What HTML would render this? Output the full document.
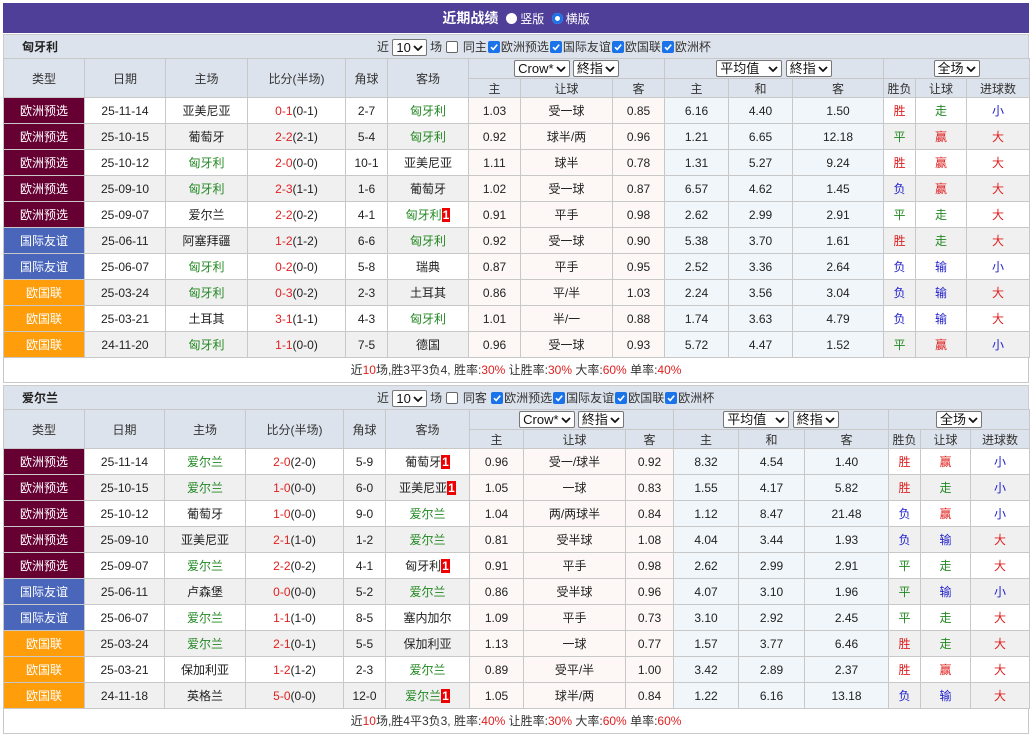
<!DOCTYPE html>
<html><head><meta charset="utf-8">
<style>
*{box-sizing:border-box;margin:0;padding:0}
body{width:1035px;height:737px;background:#fff;font-family:"Liberation Sans","Noto Sans CJK SC",sans-serif;font-size:12px;color:#222;overflow:hidden}
.top{position:absolute;left:3px;top:3px;width:1026px;height:30px;background:#4f3f99;color:#fff;text-align:center;line-height:30px;font-weight:bold;font-size:14px}
.top span{font-weight:normal;font-size:12px}
.rd{display:inline-block;width:11px;height:11px;border-radius:50%;background:#fff;vertical-align:-1px;margin:0 3px 0 4px}
.rd.on{background:#fff;box-shadow:inset 0 0 0 3px #1a73e8}
.sec{position:absolute;left:3px;width:1026px}
.tt{height:24px;background:#dde3ec;position:relative;line-height:24px;border:1px solid #ccc;border-bottom:none}
.tt b{position:absolute;left:18px;font-size:12px}
.tt .f{position:absolute;left:373px;color:#333}
.sel{display:inline-block;border:1px solid #777;border-radius:2px;background:#fff;height:17px;line-height:15px;padding:0 3px;vertical-align:middle;font-size:13px;color:#111}
.sel svg{vertical-align:1px;margin-left:2px}
.cb{display:inline-block;width:12px;height:12px;border:1px solid #666;border-radius:2px;background:#fff;vertical-align:middle;margin:-2px 1px 0;position:relative}
.cb.on{background:#1a73e8;border-color:#1a73e8}
.cb.on svg{position:absolute;left:0;top:0}
table{border-collapse:collapse;width:1026px;table-layout:fixed}
td{border:1px solid #c8c8c8;text-align:center;height:26px;white-space:nowrap;overflow:hidden}
tr.h td{background:#dde3ec;height:20px;color:#333}
tr.h2 td{height:19px}
tr.e td{background:#f0f0f0}
tr td.o{background:#fdf8f5}
tr td.u{background:#f0f6fa}
td.t1{background:#660033 !important;color:#fff}
td.t2{background:#4a66bb !important;color:#fff}
td.t3{background:#ff9d0a !important;color:#fff}
.g{color:#228822}.r{color:#e02020}.b{color:#2222cc}
.n{background:#e00;color:#fff;font-weight:bold;padding:0 1px}
.sum{height:25px;line-height:24px;text-align:center;border:1px solid #c8c8c8;border-top:none;color:#333}
</style></head><body>
<svg width="0" height="0" style="position:absolute"><defs><symbol id="ck" viewBox="0 0 10 10"><polyline points="2,5.2 4.2,7.4 8.2,2.6" fill="none" stroke="#fff" stroke-width="1.6"/></symbol><symbol id="dn" viewBox="0 0 10 6"><polyline points="1,1 5,5 9,1" fill="none" stroke="#111" stroke-width="1.8"/></symbol></defs></svg>
<div class="top">近期战绩 <span><i class="rd"></i>竖版 <i class="rd on"></i>横版</span></div>

<div class="sec" style="top:34px">
<div class="tt"><b>匈牙利</b><span class="f">近 <span class="sel">10<svg width="10" height="6"><use href="#dn"/></svg></span> 场 <i class="cb"></i> 同主<i class="cb on"><svg width="10" height="10"><use href="#ck"/></svg></i>欧洲预选<i class="cb on"><svg width="10" height="10"><use href="#ck"/></svg></i>国际友谊<i class="cb on"><svg width="10" height="10"><use href="#ck"/></svg></i>欧国联<i class="cb on"><svg width="10" height="10"><use href="#ck"/></svg></i>欧洲杯</span></div>
<table>
<colgroup><col width="81"><col width="81"><col width="82"><col width="98"><col width="42"><col width="81"><col width="52"><col width="92"><col width="52"><col width="64"><col width="64"><col width="91"><col width="32"><col width="51"><col width="63"></colgroup>
<tr class="h"><td rowspan="2">类型</td><td rowspan="2">日期</td><td rowspan="2">主场</td><td rowspan="2">比分(半场)</td><td rowspan="2">角球</td><td rowspan="2">客场</td><td colspan="3"><span class="sel">Crow*<svg width="10" height="6"><use href="#dn"/></svg></span> <span class="sel">終指<svg width="10" height="6"><use href="#dn"/></svg></span></td><td colspan="3"><span class="sel">平均值 &nbsp;<svg width="10" height="6"><use href="#dn"/></svg></span> <span class="sel">終指<svg width="10" height="6"><use href="#dn"/></svg></span></td><td colspan="3"><span class="sel">全场<svg width="10" height="6"><use href="#dn"/></svg></span></td></tr>
<tr class="h h2"><td>主</td><td>让球</td><td>客</td><td>主</td><td>和</td><td>客</td><td>胜负</td><td>让球</td><td>进球数</td></tr>
<tr><td class="t1">欧洲预选</td><td>25-11-14</td><td>亚美尼亚</td><td><span class="r">0-1</span>(0-1)</td><td>2-7</td><td class="g">匈牙利</td><td class="o">1.03</td><td class="o">受一球</td><td class="o">0.85</td><td class="u">6.16</td><td class="u">4.40</td><td class="u">1.50</td><td class="r">胜</td><td class="g">走</td><td class="b">小</td></tr>
<tr class="e"><td class="t1">欧洲预选</td><td>25-10-15</td><td>葡萄牙</td><td><span class="r">2-2</span>(2-1)</td><td>5-4</td><td class="g">匈牙利</td><td class="o">0.92</td><td class="o">球半/两</td><td class="o">0.96</td><td class="u">1.21</td><td class="u">6.65</td><td class="u">12.18</td><td class="g">平</td><td class="r">赢</td><td class="r">大</td></tr>
<tr><td class="t1">欧洲预选</td><td>25-10-12</td><td class="g">匈牙利</td><td><span class="r">2-0</span>(0-0)</td><td>10-1</td><td>亚美尼亚</td><td class="o">1.11</td><td class="o">球半</td><td class="o">0.78</td><td class="u">1.31</td><td class="u">5.27</td><td class="u">9.24</td><td class="r">胜</td><td class="r">赢</td><td class="r">大</td></tr>
<tr class="e"><td class="t1">欧洲预选</td><td>25-09-10</td><td class="g">匈牙利</td><td><span class="r">2-3</span>(1-1)</td><td>1-6</td><td>葡萄牙</td><td class="o">1.02</td><td class="o">受一球</td><td class="o">0.87</td><td class="u">6.57</td><td class="u">4.62</td><td class="u">1.45</td><td class="b">负</td><td class="r">赢</td><td class="r">大</td></tr>
<tr><td class="t1">欧洲预选</td><td>25-09-07</td><td>爱尔兰</td><td><span class="r">2-2</span>(0-2)</td><td>4-1</td><td class="g">匈牙利<span class="n">1</span></td><td class="o">0.91</td><td class="o">平手</td><td class="o">0.98</td><td class="u">2.62</td><td class="u">2.99</td><td class="u">2.91</td><td class="g">平</td><td class="g">走</td><td class="r">大</td></tr>
<tr class="e"><td class="t2">国际友谊</td><td>25-06-11</td><td>阿塞拜疆</td><td><span class="r">1-2</span>(1-2)</td><td>6-6</td><td class="g">匈牙利</td><td class="o">0.92</td><td class="o">受一球</td><td class="o">0.90</td><td class="u">5.38</td><td class="u">3.70</td><td class="u">1.61</td><td class="r">胜</td><td class="g">走</td><td class="r">大</td></tr>
<tr><td class="t2">国际友谊</td><td>25-06-07</td><td class="g">匈牙利</td><td><span class="r">0-2</span>(0-0)</td><td>5-8</td><td>瑞典</td><td class="o">0.87</td><td class="o">平手</td><td class="o">0.95</td><td class="u">2.52</td><td class="u">3.36</td><td class="u">2.64</td><td class="b">负</td><td class="b">输</td><td class="b">小</td></tr>
<tr class="e"><td class="t3">欧国联</td><td>25-03-24</td><td class="g">匈牙利</td><td><span class="r">0-3</span>(0-2)</td><td>2-3</td><td>土耳其</td><td class="o">0.86</td><td class="o">平/半</td><td class="o">1.03</td><td class="u">2.24</td><td class="u">3.56</td><td class="u">3.04</td><td class="b">负</td><td class="b">输</td><td class="r">大</td></tr>
<tr><td class="t3">欧国联</td><td>25-03-21</td><td>土耳其</td><td><span class="r">3-1</span>(1-1)</td><td>4-3</td><td class="g">匈牙利</td><td class="o">1.01</td><td class="o">半/一</td><td class="o">0.88</td><td class="u">1.74</td><td class="u">3.63</td><td class="u">4.79</td><td class="b">负</td><td class="b">输</td><td class="r">大</td></tr>
<tr class="e"><td class="t3">欧国联</td><td>24-11-20</td><td class="g">匈牙利</td><td><span class="r">1-1</span>(0-0)</td><td>7-5</td><td>德国</td><td class="o">0.96</td><td class="o">受一球</td><td class="o">0.93</td><td class="u">5.72</td><td class="u">4.47</td><td class="u">1.52</td><td class="g">平</td><td class="r">赢</td><td class="b">小</td></tr>
</table>
<div class="sum">近<span class="r">10</span>场,胜3平3负4, 胜率:<span class="r">30%</span> 让胜率:<span class="r">30%</span> 大率:<span class="r">60%</span> 单率:<span class="r">40%</span></div>
</div>

<div class="sec" style="top:385px">
<div class="tt"><b>爱尔兰</b><span class="f">近 <span class="sel">10<svg width="10" height="6"><use href="#dn"/></svg></span> 场 <i class="cb"></i> 同客 <i class="cb on"><svg width="10" height="10"><use href="#ck"/></svg></i>欧洲预选<i class="cb on"><svg width="10" height="10"><use href="#ck"/></svg></i>国际友谊<i class="cb on"><svg width="10" height="10"><use href="#ck"/></svg></i>欧国联<i class="cb on"><svg width="10" height="10"><use href="#ck"/></svg></i>欧洲杯</span></div>
<table>
<colgroup><col width="81"><col width="80"><col width="81"><col width="98"><col width="42"><col width="84"><col width="54"><col width="102"><col width="48"><col width="65"><col width="66"><col width="84"><col width="32"><col width="50"><col width="59"></colgroup>
<tr class="h"><td rowspan="2">类型</td><td rowspan="2">日期</td><td rowspan="2">主场</td><td rowspan="2">比分(半场)</td><td rowspan="2">角球</td><td rowspan="2">客场</td><td colspan="3"><span class="sel">Crow*<svg width="10" height="6"><use href="#dn"/></svg></span> <span class="sel">終指<svg width="10" height="6"><use href="#dn"/></svg></span></td><td colspan="3"><span class="sel">平均值 &nbsp;<svg width="10" height="6"><use href="#dn"/></svg></span> <span class="sel">終指<svg width="10" height="6"><use href="#dn"/></svg></span></td><td colspan="3"><span class="sel">全场<svg width="10" height="6"><use href="#dn"/></svg></span></td></tr>
<tr class="h h2"><td>主</td><td>让球</td><td>客</td><td>主</td><td>和</td><td>客</td><td>胜负</td><td>让球</td><td>进球数</td></tr>
<tr><td class="t1">欧洲预选</td><td>25-11-14</td><td class="g">爱尔兰</td><td><span class="r">2-0</span>(2-0)</td><td>5-9</td><td>葡萄牙<span class="n">1</span></td><td class="o">0.96</td><td class="o">受一/球半</td><td class="o">0.92</td><td class="u">8.32</td><td class="u">4.54</td><td class="u">1.40</td><td class="r">胜</td><td class="r">赢</td><td class="b">小</td></tr>
<tr class="e"><td class="t1">欧洲预选</td><td>25-10-15</td><td class="g">爱尔兰</td><td><span class="r">1-0</span>(0-0)</td><td>6-0</td><td>亚美尼亚<span class="n">1</span></td><td class="o">1.05</td><td class="o">一球</td><td class="o">0.83</td><td class="u">1.55</td><td class="u">4.17</td><td class="u">5.82</td><td class="r">胜</td><td class="g">走</td><td class="b">小</td></tr>
<tr><td class="t1">欧洲预选</td><td>25-10-12</td><td>葡萄牙</td><td><span class="r">1-0</span>(0-0)</td><td>9-0</td><td class="g">爱尔兰</td><td class="o">1.04</td><td class="o">两/两球半</td><td class="o">0.84</td><td class="u">1.12</td><td class="u">8.47</td><td class="u">21.48</td><td class="b">负</td><td class="r">赢</td><td class="b">小</td></tr>
<tr class="e"><td class="t1">欧洲预选</td><td>25-09-10</td><td>亚美尼亚</td><td><span class="r">2-1</span>(1-0)</td><td>1-2</td><td class="g">爱尔兰</td><td class="o">0.81</td><td class="o">受半球</td><td class="o">1.08</td><td class="u">4.04</td><td class="u">3.44</td><td class="u">1.93</td><td class="b">负</td><td class="b">输</td><td class="r">大</td></tr>
<tr><td class="t1">欧洲预选</td><td>25-09-07</td><td class="g">爱尔兰</td><td><span class="r">2-2</span>(0-2)</td><td>4-1</td><td>匈牙利<span class="n">1</span></td><td class="o">0.91</td><td class="o">平手</td><td class="o">0.98</td><td class="u">2.62</td><td class="u">2.99</td><td class="u">2.91</td><td class="g">平</td><td class="g">走</td><td class="r">大</td></tr>
<tr class="e"><td class="t2">国际友谊</td><td>25-06-11</td><td>卢森堡</td><td><span class="r">0-0</span>(0-0)</td><td>5-2</td><td class="g">爱尔兰</td><td class="o">0.86</td><td class="o">受半球</td><td class="o">0.96</td><td class="u">4.07</td><td class="u">3.10</td><td class="u">1.96</td><td class="g">平</td><td class="b">输</td><td class="b">小</td></tr>
<tr><td class="t2">国际友谊</td><td>25-06-07</td><td class="g">爱尔兰</td><td><span class="r">1-1</span>(1-0)</td><td>8-5</td><td>塞内加尔</td><td class="o">1.09</td><td class="o">平手</td><td class="o">0.73</td><td class="u">3.10</td><td class="u">2.92</td><td class="u">2.45</td><td class="g">平</td><td class="g">走</td><td class="r">大</td></tr>
<tr class="e"><td class="t3">欧国联</td><td>25-03-24</td><td class="g">爱尔兰</td><td><span class="r">2-1</span>(0-1)</td><td>5-5</td><td>保加利亚</td><td class="o">1.13</td><td class="o">一球</td><td class="o">0.77</td><td class="u">1.57</td><td class="u">3.77</td><td class="u">6.46</td><td class="r">胜</td><td class="g">走</td><td class="r">大</td></tr>
<tr><td class="t3">欧国联</td><td>25-03-21</td><td>保加利亚</td><td><span class="r">1-2</span>(1-2)</td><td>2-3</td><td class="g">爱尔兰</td><td class="o">0.89</td><td class="o">受平/半</td><td class="o">1.00</td><td class="u">3.42</td><td class="u">2.89</td><td class="u">2.37</td><td class="r">胜</td><td class="r">赢</td><td class="r">大</td></tr>
<tr class="e"><td class="t3">欧国联</td><td>24-11-18</td><td>英格兰</td><td><span class="r">5-0</span>(0-0)</td><td>12-0</td><td class="g">爱尔兰<span class="n">1</span></td><td class="o">1.05</td><td class="o">球半/两</td><td class="o">0.84</td><td class="u">1.22</td><td class="u">6.16</td><td class="u">13.18</td><td class="b">负</td><td class="b">输</td><td class="r">大</td></tr>
</table>
<div class="sum">近<span class="r">10</span>场,胜4平3负3, 胜率:<span class="r">40%</span> 让胜率:<span class="r">30%</span> 大率:<span class="r">60%</span> 单率:<span class="r">60%</span></div>
</div>
</body></html>
